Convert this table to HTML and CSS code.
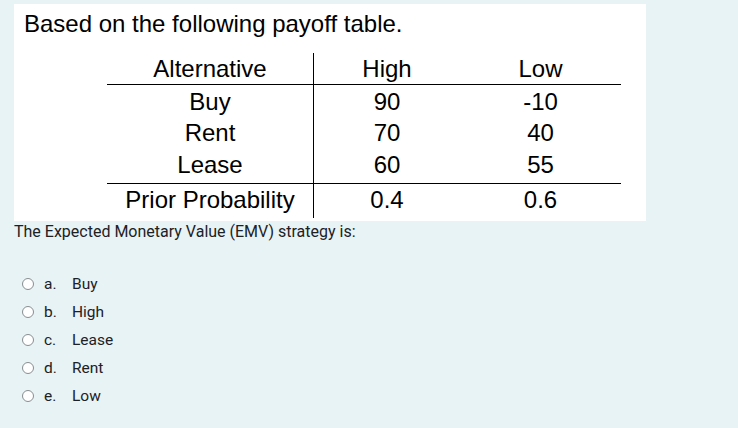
FILE: index.html
```html
<!DOCTYPE html>
<html>
<head>
<meta charset="utf-8">
<link rel="stylesheet" href="styles.css">
</head>
<body>
<div class="page">
  <div class="figure">
    <div class="title">Based on the following payoff table.</div>
    <table class="payoff">
      <tr class="head">
        <td class="alt">Alternative</td>
        <td class="num">High</td>
        <td class="num">Low</td>
      </tr>
      <tr class="body r1">
        <td class="alt">Buy</td>
        <td class="num">90</td>
        <td class="num">-10</td>
      </tr>
      <tr class="body r2">
        <td class="alt">Rent</td>
        <td class="num">70</td>
        <td class="num">40</td>
      </tr>
      <tr class="body r3">
        <td class="alt">Lease</td>
        <td class="num">60</td>
        <td class="num">55</td>
      </tr>
      <tr class="prob">
        <td class="alt">Prior Probability</td>
        <td class="num">0.4</td>
        <td class="num">0.6</td>
      </tr>
    </table>
  </div>
  <div class="question">The Expected Monetary Value (EMV) strategy is:</div>
  <div class="answers">
    <label class="opt"><span class="radio"></span><span class="letter">a.</span><span class="text">Buy</span></label>
    <label class="opt"><span class="radio"></span><span class="letter">b.</span><span class="text">High</span></label>
    <label class="opt"><span class="radio"></span><span class="letter">c.</span><span class="text">Lease</span></label>
    <label class="opt"><span class="radio"></span><span class="letter">d.</span><span class="text">Rent</span></label>
    <label class="opt"><span class="radio"></span><span class="letter">e.</span><span class="text">Low</span></label>
  </div>
</div>
</body>
</html>
```
FILE: styles.css
```css
html, body {
  margin: 0;
  padding: 0;
  background: #e7f3f5;
}
.page {
  width: 738px;
  height: 428px;
  padding: 4px 0 0 14px;
  box-sizing: border-box;
  font-family: Roboto, "Liberation Sans", sans-serif;
  color: #1d2125;
}
.figure {
  width: 632px;
  height: 217px;
  background: #ffffff;
  box-sizing: border-box;
  padding: 6px 0 0 10px;
  font-family: "Liberation Sans", Arial, sans-serif;
  color: #000;
}
.title {
  font-size: 24px;
  line-height: 28px;
}
.payoff {
  border-collapse: collapse;
  margin: 15px 0 0 83px;
  font-size: 24px;
}
.payoff td {
  padding: 0;
  text-align: center;
  line-height: 24px;
}
.payoff td.alt {
  width: 206px;
  border-right: 1.5px solid #000;
}
.payoff td.num:nth-child(2) {
  width: 146px;
}
.payoff td.num:nth-child(3) {
  width: 161px;
}
.payoff tr.head td {
  height: 31px;
  border-bottom: 1.5px solid #000;
  vertical-align: middle;
}
.payoff tr.body td {
  vertical-align: top;
  padding-top: 5px;
  box-sizing: border-box;
}
.payoff tr.r2 td,
.payoff tr.r3 td {
  padding-top: 4px;
}
.payoff tr.r1 td,
.payoff tr.r2 td {
  height: 32px;
}
.payoff tr.r3 td {
  height: 35px;
}
.payoff tr.prob td {
  height: 31px;
  padding-bottom: 3px;
  border-top: 1.5px solid #000;
  vertical-align: middle;
}
.question {
  margin-top: 1px;
  font-size: 16px;
  line-height: 20px;
}
.answers {
  margin-top: 32px;
  display: flex;
  flex-direction: column;
  gap: 8px;
  padding-left: 8px;
}
.opt {
  display: flex;
  align-items: center;
  height: 20px;
  font-size: 15.5px;
}
.radio {
  width: 10px;
  height: 10px;
  border: 1.5px solid #8a8d90;
  border-radius: 50%;
  background: #fff;
  margin-right: 10px;
}
.letter {
  width: 28px;
}
```
